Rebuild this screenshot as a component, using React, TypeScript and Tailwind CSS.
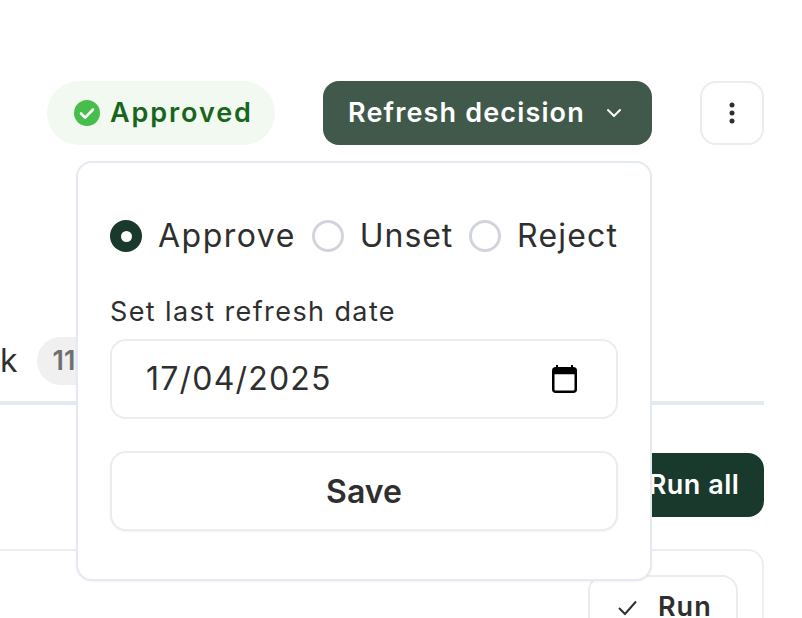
import React from "react";

const font = { fontFamily: '"Inter", "Liberation Sans", sans-serif' };

function RadioOption({ label, checked, spacing }: { label: string; checked?: boolean; spacing: string }) {
  return (
    <label className="flex items-center gap-4">
      {checked ? (
        <span className="flex h-8 w-8 items-center justify-center rounded-full bg-[#18392b]">
          <span className="h-[11px] w-[11px] rounded-full bg-white" />
        </span>
      ) : (
        <span className="h-8 w-8 rounded-full border-[3px] border-[#d1d5db] bg-white" />
      )}
      <span className={"text-[32px] leading-[40px] text-[#2f2f2f] " + spacing}>{label}</span>
    </label>
  );
}

export default function App() {
  return (
    <div
      className="relative h-[618px] w-[802px] overflow-hidden bg-white pt-[81px] pr-[38px]"
      style={font}
    >
      <div className="flex h-16 items-center justify-end">
        <div className="flex h-16 w-[228px] items-center gap-[10px] rounded-full bg-[#f2f9f1] pl-[27px]">
          <svg width="26" height="26" viewBox="0 0 26 26">
            <circle cx="13" cy="13" r="13" fill="#47bd4b" />
            <path d="M7 13.500l4.200 4.200L19 9.500" fill="none" stroke="#fff" strokeWidth="2.600" strokeLinecap="round" strokeLinejoin="round" />
          </svg>
          <span className="text-[27px] font-semibold tracking-[1.9px] text-[#17661b]">Approved</span>
        </div>
        <button className="ml-12 flex h-16 w-[329px] items-center rounded-2xl bg-[#40594b] pl-[25px] text-white">
          <span className="text-[27px] font-semibold tracking-[1.15px]">Refresh decision</span>
          <svg className="ml-5" width="18" height="18" viewBox="0 0 18 18">
            <path d="M3 6l6 6 6-6" fill="none" stroke="#fff" strokeWidth="2" strokeLinecap="round" strokeLinejoin="round" />
          </svg>
        </button>
        <button className="ml-[48px] flex h-16 w-[64px] shrink-0 items-center justify-center rounded-2xl border-2 border-[#ececec] bg-white">
          <svg width="6" height="24" viewBox="0 0 6 24" fill="#2f2f2f">
            <circle cx="3" cy="4" r="2.500" />
            <circle cx="3" cy="12" r="2.500" />
            <circle cx="3" cy="20" r="2.500" />
          </svg>
        </button>
      </div>

      <div className="mt-[192px] flex h-12 items-center">
        <span className="text-[32px] leading-[40px] text-[#2f2f2f]">k</span>
        <span className="ml-[19px] flex h-12 w-20 items-center rounded-full bg-[#f0f0f0] pl-4 text-[27px] font-semibold text-[#6f6f6f]">
          11
        </span>
      </div>
      <div className="mt-4 h-1 bg-[#e4e9f2]" />

      <div className="mt-12 flex justify-end">
        <button className="h-16 w-[160px] rounded-2xl bg-[#18392b] pl-[20px] text-[27px] font-semibold tracking-[0.5px] text-white">
          Run all
        </button>
      </div>

      <div className="-ml-6 mt-8 flex h-[200px] justify-end rounded-2xl border-2 border-[#eeeeee] pt-6 pr-6">
        <button className="flex h-16 w-[150px] items-center gap-[18px] rounded-2xl border-2 border-[#ececec] bg-white pl-[26px]">
          <svg width="24" height="24" viewBox="0 0 24 24">
            <path d="M3 13l6 6L20 6.500" fill="none" stroke="#2f2f2f" strokeWidth="2" />
          </svg>
          <span className="text-[27px] font-semibold tracking-[1px] text-[#2f2f2f]">Run</span>
        </button>
      </div>

      <div className="absolute top-[161px] left-[76px] h-[420px] w-[576px] rounded-2xl border-2 border-[#e4e9f2] bg-white px-8 pt-[53px] shadow-xs">
        <div className="flex items-center gap-4">
          <RadioOption label="Approve" checked spacing="tracking-[1.5px]" />
          <RadioOption label="Unset" spacing="tracking-[0.9px]" />
          <RadioOption label="Reject" spacing="tracking-[1.2px]" />
        </div>
        <div className="mt-[40px] text-[27px] leading-[32px] tracking-[1.4px] text-[#2f2f2f]">Set last refresh date</div>
        <div className="mt-[11px] flex h-20 w-[508px] items-center justify-between rounded-2xl border-2 border-[#ececec] pl-[34px] pr-[39px]">
          <span className="text-[32px] tracking-[1.2px] text-[#2f2f2f]">17/04/2025</span>
          <svg width="25" height="28" viewBox="0 0 25 28">
            <path d="M5 0v4M20 0v4" stroke="#000" strokeWidth="2" />
            <rect x="1.250" y="3.250" width="22.500" height="23.500" rx="2.500" fill="none" stroke="#000" strokeWidth="2.500" />
            <rect x="1.250" y="3.250" width="22.500" height="6" fill="#000" />
          </svg>
        </div>
        <button className="mt-8 h-20 w-[508px] rounded-2xl border-2 border-[#ececec] bg-white pt-0.5 text-[32px] font-semibold text-[#2f2f2f] shadow-xs">
          Save
        </button>
      </div>
    </div>
  );
}
